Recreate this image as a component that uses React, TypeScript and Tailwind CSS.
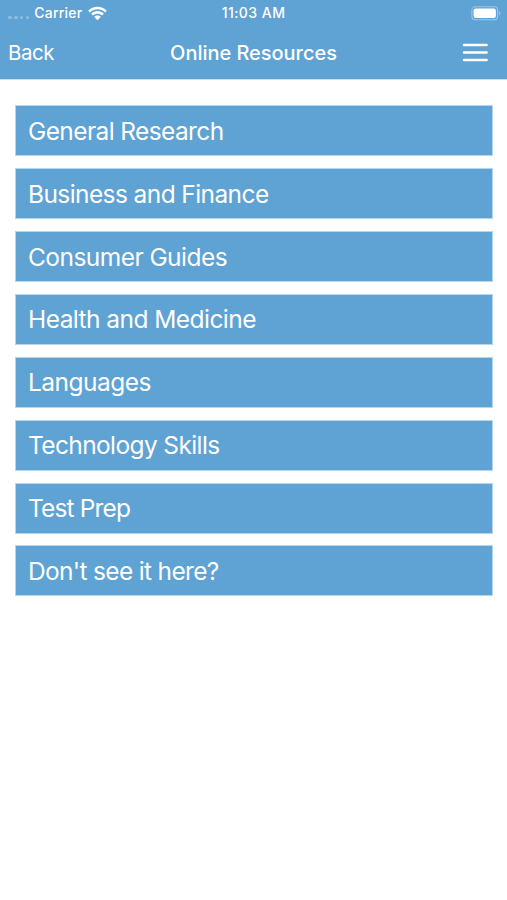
import React from "react";

const resources = [
  { label: "General Research", tracking: "tracking-[-0.61px]" },
  { label: "Business and Finance", tracking: "tracking-[-0.59px]" },
  { label: "Consumer Guides", tracking: "tracking-[-0.55px]" },
  { label: "Health and Medicine", tracking: "tracking-[-0.55px]" },
  { label: "Languages", tracking: "tracking-[-0.53px]" },
  { label: "Technology Skills", tracking: "tracking-[-0.62px]" },
  { label: "Test Prep", tracking: "tracking-[-0.85px]" },
  { label: "Don't see it here?", tracking: "tracking-[-0.67px]" },
];

const WifiIcon = () => (
  <svg width="19" height="15" viewBox="0 0 19 15" fill="#fff">
    <path d="M0.2 4.7C5.2-.7 13.8-.7 18.8 4.7L17.1 6.5C13 2.2 6 2.2 1.9 6.5Z" />
    <path d="M3.1 7.7C6.6 4.1 12.4 4.1 15.9 7.7L14.1 9.5C11.5 7 7.5 7 4.9 9.5Z" />
    <path d="M6.1 10.8C8 9 11 9 12.9 10.8L9.5 14.3Z" />
  </svg>
);

const BatteryIcon = () => (
  <svg width="30" height="15" viewBox="0 0 30 15" fill="none">
    <rect x="0.9" y="0.8" width="25.7" height="12.9" rx="3.4" stroke="#fff" strokeOpacity="0.4" strokeWidth="1.1" />
    <rect x="2.6" y="2.5" width="22.3" height="9.5" rx="2" fill="#fff" />
    <path d="M28.1 5.2C29.8 6 29.8 8.5 28.1 9.3Z" fill="#fff" fillOpacity="0.45" />
  </svg>
);

const StatusBar = () => (
  <div className="grid grid-cols-[1fr_auto_1fr] items-center h-[26px]">
    <div className="flex items-center pl-[8px]">
      <div className="flex gap-[2.2px] pt-[9px] mr-[5px]">
        {[0, 1, 2, 3].map((dot) => (
          <span key={dot} className="w-[3.7px] h-[3.7px] rounded-full bg-white/30" />
        ))}
      </div>
      <span className="text-[14px] leading-4 font-medium tracking-[0.2px] mr-[5.5px] pb-px">Carrier</span>
      <WifiIcon />
    </div>
    <span className="text-[14px] leading-4 font-medium tracking-[0.45px] pb-px">11:03 AM</span>
    <div className="flex justify-end pr-[6px]">
      <BatteryIcon />
    </div>
  </div>
);

const NavBar = () => (
  <div className="grid grid-cols-[1fr_auto_1fr] items-center h-[53px]">
    <button className="text-left text-[20.5px] tracking-[-0.5px] pl-[8px] pt-px">Back</button>
    <h1 className="text-[20px] font-medium tracking-[-0.03px]">Online Resources</h1>
    <button className="flex justify-end pr-[19px]" aria-label="Menu">
      <svg width="26" height="20" viewBox="0 0 26 20" stroke="#fff" strokeWidth="2.5" strokeLinecap="round">
        <path d="M2 2H24.6M2 9.5H24.6M2 17H24.6" />
      </svg>
    </button>
  </div>
);

export default function App() {
  return (
    <div className="w-full h-[900px] bg-white text-white font-['Inter','Liberation_Sans',sans-serif] whitespace-nowrap overflow-hidden">
      <header className="h-[80px] bg-[#5fa2d4] border-b border-[#c3e0f4]">
        <StatusBar />
        <NavBar />
      </header>

      <main className="flex flex-col gap-[11.9px] pt-[25.2px] pl-[15px] pr-[14px]">
        {resources.map(({ label, tracking }) => (
          <button
            key={label}
            className={`flex items-center h-[51px] pl-[12px] pt-px bg-[#5fa2d4] border border-[#b5d6ee] text-left text-[24.5px] ${tracking}`}
          >
            {label}
          </button>
        ))}
      </main>
    </div>
  );
}
